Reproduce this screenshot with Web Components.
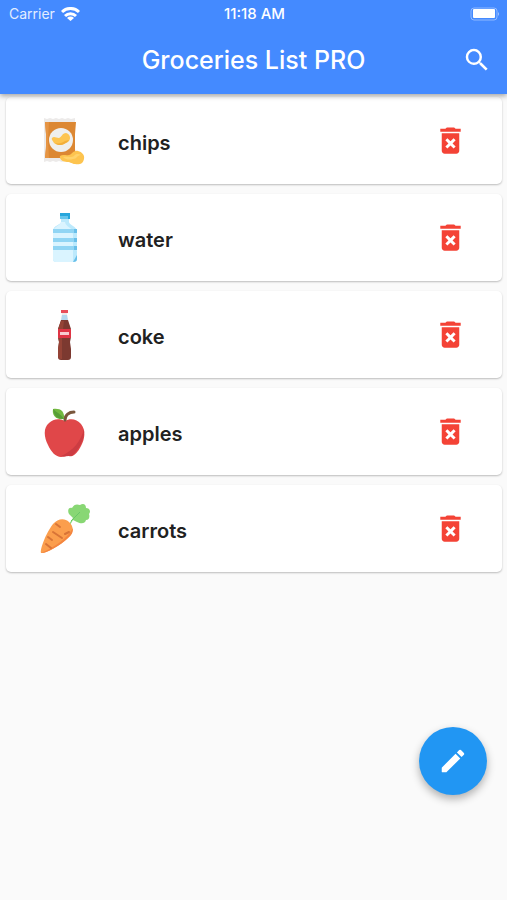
<!DOCTYPE html>
<html lang="en">
<head>
<meta charset="utf-8">
<meta name="viewport" content="width=device-width, initial-scale=1">
<title>Groceries List PRO</title>
<style>
  body {
    margin: 0;
    background: #fafafa;
    font-family: Inter, Roboto, sans-serif;
    color: #212121;
  }
</style>
</head>
<body>
<grocery-app></grocery-app>

<script>
const PICTURES = {
  chips: `
    <path fill="#eceae9" d="M4 2l3 1 3-1 3 1 3-1 3 1 3-1 3 1 3-1 3 1 4-1v6l-1 34 1 4-4-1-3 1-3-1-3 1-3-1-3 1-3-1-3 1-3-1-3 1z"/>
    <path fill="#dc8732" d="M5 6h31l-1 12v15l1 9H5l1-9V18z"/>
    <path fill="#e69544" d="M5 6h4l-1 18 1 18H5l1-12V18z"/>
    <circle cx="21" cy="24" r="12" fill="#efefed"/>
    <path fill="#fdc44f" d="M12 22c2-2 4 0 7 0 3-1 3-5 7-5 4 1 5 5 3 8-2 2-4 2-5 3-3 2-8 1-10-1-1-2-3-4-2-5z"/>
    <path fill="#f2ae3b" d="M15 27c4 1 7 0 10-2l4-1c-2 3-4 3-5 4-3 2-7 1-9-1z"/>
    <path fill="#fdc44f" d="M20 40c3-2 6 0 9-1 3 0 4-5 9-4 4 1 7 4 6 8-1 5-5 6-9 5-3 0-4-2-8-2-4 0-8-3-7-6z"/>
    <path fill="#ffd36b" d="M23 41c4-1 8 1 11-1 2-3 5-2 7-1-4 0-4 4-8 4-3 1-7 1-10-2z"/>`,
  water: `
    <path fill="#27a6dc" d="M20 0h10v6H20z"/>
    <path fill="#66c5ec" d="M20 3h8v3h-8z"/>
    <path fill="#bce9fc" d="M21 6h8v3c0 3 8 4 8 10v5l-1 3 1 2v3l-1 3 1 3v8q0 3-3 3H16q-3 0-3-3v-8l1-3-1-3v-3l1-3-1-3v-5c0-6 8-6 8-9z"/>
    <path fill="#daf4ff" d="M21 9h4c1 6 8 4 8 13v27H16q-3 0-3-3V20c0-7 7-7 8-11z"/>
    <path fill="#91d5f4" d="M13 16h24v4H13zm0 9h24v4H13zm0 8h24v4H13z"/>
    <path fill="#69bfe9" d="M34 16h3v4h-3zm0 9h3v4h-3zm0 8h3v4h-3zM33 49l4-7v4q0 3-4 3z"/>`,
  coke: `
    <path fill="#efe7e9" d="M21 0h7v2l-1 2 1 6h-7l1-6-1-2z"/>
    <path fill="#e94e5b" d="M21 0h7v3h-7z"/>
    <path fill="#b5d7ef" d="M22 5h5l1 6h-7z"/>
    <path fill="#7c3930" d="M21 10h7l3 9v8l-1 5 1 7v8q0 3-3 3h-7q-3 0-3-3v-8l1-7-1-5v-8z"/>
    <path fill="#944336" d="M21 11h3l-2 17v21h-1q-3 0-3-3v-7l1-7-1-5v-8z"/>
    <path fill="#df3545" d="M18 19h13v9H18z"/>
    <path fill="#fff" opacity=".75" d="M20 22h9v3h-9z"/>`,
  apples: `
    <path fill="#e04749" d="M25 14c5-3 12-2 16 3 5 6 4 15 0 22-3 6-7 11-11 10-3-1-6 1-9 1-5 0-10-5-13-12-4-8-5-17 1-22 4-4 10-5 16-2z"/>
    <path fill="#cc3c42" d="M44 22c1 9-4 18-9 24-2 2-4 4-6 3-3 0-5 1-8 0 12-5 20-15 23-27z"/>
    <path fill="none" stroke="#79573d" stroke-width="3" stroke-linecap="round" d="M25 13c0-5 4-8 9-8"/>
    <path fill="#72b840" d="M24 12C15 13 12 8 13 2 20 1 25 4 24 12z"/>
    <path fill="#579e37" d="M13 2c3 3 8 5 11 10-8 0-10-4-11-10z"/>`,
  carrots: `
    <path fill="#88d774" d="M29 20l4-6-4-4c-2-4 0-7 3-6 2-4 5-4 8-3 3-2 6-1 6 3 4 0 5 4 3 6 1 3 0 6-3 6-1 4-5 4-9 2l-4-2-3 5z"/>
    <path fill="none" stroke="#69c768" stroke-width="1" d="M31 17l9-9"/>
    <path fill="#fb9e4d" d="M1 49C0 45 6 29 13 20c5-6 12-6 16-2 5 4 5 11-1 16C20 42 5 50 1 49z"/>
    <path fill="#f48640" d="M33 24c0 4-1 7-5 10C20 42 5 50 1 49c12-5 26-14 32-25z"/>
    <path fill="none" stroke="#d87437" stroke-width="2" stroke-linecap="round" d="M16 20l4 3M13 28l9 6M8 33l4 3M6 40l5 4M25 30l4-2"/>`
};

class StatusBar extends HTMLElement {
  constructor() {
    super();
    this.attachShadow({ mode: "open" });
  }

  connectedCallback() {
    this.shadowRoot.innerHTML = `
      <style>
        :host {
          display: grid;
          grid-template-columns: 1fr auto 1fr;
          align-items: center;
          height: 28px;
          padding: 0 7px 0 9px;
          font-size: 14px;
          line-height: 20px;
        }
        .carrier {
          display: flex;
          align-items: center;
          gap: 6px;
        }
        .carrier span { opacity: 0.85; }
        .time { font-size: 15px; font-weight: 500; }
        .battery { justify-self: end; }
        svg { display: block; }
      </style>
      <div class="carrier">
        <span>Carrier</span>
        <svg width="19" height="14" viewBox="0 0 19 14" fill="none" stroke="#fff" stroke-width="3" aria-hidden="true">
          <path d="M1 5a12 12 0 0 1 17 0M4 9a8 8 0 0 1 11 0"/>
          <path fill="#fff" stroke="none" d="M6 11a5 5 0 0 1 7 0l-3.500 3z"/>
        </svg>
      </div>
      <div class="time">11:18 AM</div>
      <svg class="battery" width="30" height="14" viewBox="0 0 30 14" aria-hidden="true">
        <rect x="1" y="1" width="26" height="12" rx="3" fill="none" stroke="#fff" opacity=".4"/>
        <rect x="3" y="2" width="22" height="9" rx="1" fill="#fff"/>
        <path d="M28 5q2 2 0 4z" fill="#fff" opacity=".5"/>
      </svg>
    `;
  }
}

class AppBar extends HTMLElement {
  constructor() {
    super();
    this.attachShadow({ mode: "open" });
  }

  connectedCallback() {
    this.shadowRoot.innerHTML = `
      <style>
        :host {
          display: block;
          position: relative;
          z-index: 1;
          background: #448aff;
          color: #fff;
          box-shadow: 0 2px 5px rgba(0, 0, 0, 0.35);
        }
        .toolbar {
          display: grid;
          grid-template-columns: 48px 1fr 48px;
          align-items: center;
          height: 64px;
          padding: 0 6px 2px;
        }
        h1 {
          grid-column: 2;
          margin: 0;
          font-size: 25px;
          line-height: 32px;
          font-weight: 500;
          text-align: center;
        }
        button {
          display: grid;
          place-items: center;
          height: 48px;
          padding: 0;
          border: none;
          background: none;
          color: inherit;
          cursor: pointer;
        }
      </style>
      <status-bar></status-bar>
      <div class="toolbar">
        <h1><slot></slot></h1>
        <button aria-label="Search">
          <svg width="30" height="30" viewBox="0 0 24 24" fill="currentColor">
            <path d="M15.500 14h-.79l-.28-.27A6.470 6.470 0 0 0 16 9.500 6.500 6.500 0 1 0 9.500 16c1.610 0 3.090-.59 4.230-1.570l.27.28v.79l5 4.990L20.490 19l-4.990-5zm-6 0C7.010 14 5 11.990 5 9.500S7.010 5 9.500 5 14 7.010 14 9.500 11.990 14 9.500 14z"/>
          </svg>
        </button>
      </div>
    `;
  }
}

class GroceryItem extends HTMLElement {
  constructor() {
    super();
    this.attachShadow({ mode: "open" });
  }

  connectedCallback() {
    const name = this.getAttribute("name");

    this.shadowRoot.innerHTML = `
      <style>
        :host {
          display: flex;
          align-items: center;
          gap: 28px;
          min-height: 87px;
          padding: 0 28px 0 34px;
          box-sizing: border-box;
          border-radius: 5px;
          background: #fff;
          box-shadow: 0 1px 2px rgba(0, 0, 0, 0.25);
        }
        .name {
          flex: 1;
          padding-top: 4px;
          font-size: 20px;
          line-height: 28px;
          font-weight: 600;
        }
        button {
          display: grid;
          place-items: center;
          width: 48px;
          height: 48px;
          padding: 0;
          border: none;
          background: none;
          color: #f44336;
          cursor: pointer;
        }
      </style>
      <svg width="50" height="50" viewBox="0 0 50 50" aria-hidden="true">${PICTURES[name]}</svg>
      <span class="name">${name}</span>
      <button aria-label="Delete ${name}">
        <svg width="35" height="35" viewBox="0 0 24 24" fill="currentColor">
          <path d="M6 19c0 1.100.9 2 2 2h8c1.100 0 2-.9 2-2V7H6v12zm2.460-7.120l1.410-1.410L12 12.590l2.120-2.120 1.410 1.410L13.410 14l2.120 2.120-1.410 1.410L12 15.410l-2.120 2.120-1.410-1.410L10.590 14l-2.130-2.120zM15.500 4l-1-1h-5l-1 1H5v2h14V4z"/>
        </svg>
      </button>
    `;

    this.shadowRoot.querySelector("button").addEventListener("click", () => this.remove());
  }
}

class EditButton extends HTMLElement {
  constructor() {
    super();
    this.attachShadow({ mode: "open" });
  }

  connectedCallback() {
    this.shadowRoot.innerHTML = `
      <style>
        :host {
          display: block;
          position: fixed;
          right: 20px;
          bottom: 105px;
          z-index: 2;
        }
        button {
          display: grid;
          place-items: center;
          width: 68px;
          height: 68px;
          padding: 0;
          border: none;
          border-radius: 50%;
          background: #2196f3;
          color: #fff;
          box-shadow: 0 4px 8px rgba(0, 0, 0, 0.3);
          cursor: pointer;
        }
      </style>
      <button aria-label="Edit list">
        <svg width="30" height="30" viewBox="0 0 24 24" fill="currentColor">
          <path d="M3 17.460v3.040c0 .28.22.5.5.5h3.040c.13 0 .26-.05.35-.15L17.810 9.940l-3.750-3.750L3.150 17.100c-.1.1-.15.22-.15.36zM20.710 7.040a1 1 0 0 0 0-1.410l-2.340-2.340a1 1 0 0 0-1.410 0l-1.830 1.830 3.750 3.750 1.830-1.830z"/>
        </svg>
      </button>
    `;
  }
}

class GroceryApp extends HTMLElement {
  constructor() {
    super();
    this.attachShadow({ mode: "open" });
  }

  connectedCallback() {
    const items = Object.keys(PICTURES);

    this.shadowRoot.innerHTML = `
      <style>
        :host {
          display: block;
          min-height: 100vh;
        }
        main {
          display: flex;
          flex-direction: column;
          gap: 10px;
          padding: 3px 5px 3px 6px;
        }
      </style>
      <app-bar>Groceries List PRO</app-bar>
      <main>
        ${items.map((name) => `<grocery-item name="${name}"></grocery-item>`).join("")}
      </main>
      <edit-button></edit-button>
    `;
  }
}

customElements.define("status-bar", StatusBar);
customElements.define("app-bar", AppBar);
customElements.define("grocery-item", GroceryItem);
customElements.define("edit-button", EditButton);
customElements.define("grocery-app", GroceryApp);
</script>
</body>
</html>
